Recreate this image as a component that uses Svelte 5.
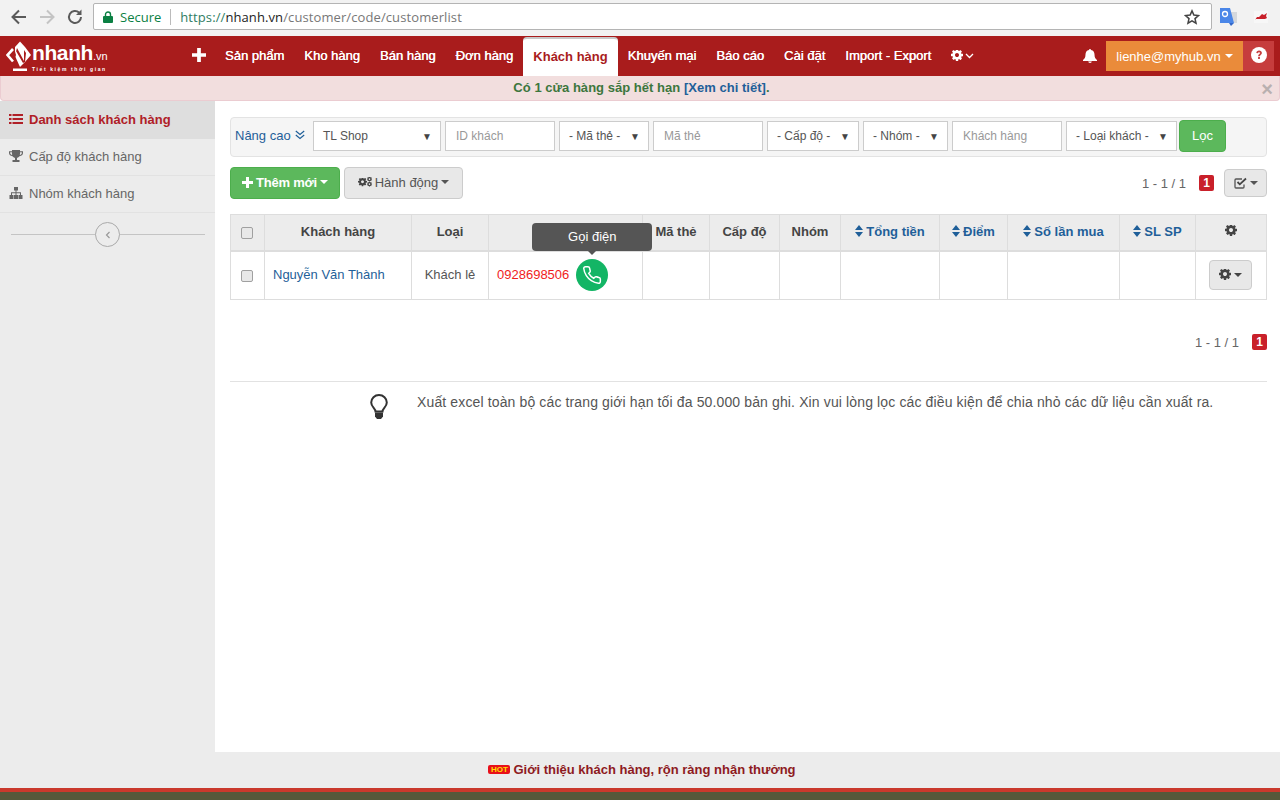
<script lang="ts">
  const navItems = ['Sản phẩm', 'Kho hàng', 'Bán hàng', 'Đơn hàng', 'Khách hàng', 'Khuyến mại', 'Báo cáo', 'Cài đặt', 'Import - Export']
  const filters = [
    { label: 'ID khách', w: 110, select: false },
    { label: '- Mã thẻ -', w: 90, select: true },
    { label: 'Mã thẻ', w: 110, select: false },
    { label: '- Cấp độ -', w: 92, select: true },
    { label: '- Nhóm -', w: 85, select: true },
    { label: 'Khách hàng', w: 110, select: false },
    { label: '- Loại khách -', w: 111, select: true }
  ]
  const columns = [
    { label: 'Mã thẻ', w: 67 },
    { label: 'Cấp độ', w: 70 },
    { label: 'Nhóm', w: 61 },
    { label: 'Tổng tiền', w: 99, sort: true },
    { label: 'Điểm', w: 68, sort: true },
    { label: 'Số lần mua', w: 112, sort: true },
    { label: 'SL SP', w: 76, sort: true }
  ]
  const gear = 'M1024 640q0-106-75-181t-181-75-181 75-75 181 75 181 181 75 181-75 75-181zm512-109v222q0 12-8 23t-20 13l-185 28q-19 54-39 91 35 50 107 138 10 12 10 25t-9 23q-27 37-99 108t-94 71q-12 0-26-9l-138-108q-44 23-91 38-16 136-29 186-7 28-36 28h-222q-14 0-24.500-8.500t-11.500-21.500l-28-184q-49-16-90-37l-141 107q-10 9-25 9-14 0-25-11-126-114-165-168-7-10-7-23 0-12 8-23 15-21 51-66.500t54-70.500q-27-50-41-99l-183-27q-13-2-21-12.500t-8-23.500v-222q0-12 8-23t19-13l186-28q14-46 39-92-40-57-107-138-10-12-10-24 0-10 9-23 26-36 98.500-107.500t94.500-71.500q13 0 26 10l138 107q44-23 91-38 16-136 29-186 7-28 36-28h222q14 0 24.500 8.500t11.500 21.500l28 184q49 16 90 37l142-107q9-9 24-9 13 0 25 10 129 119 165 170 7 8 7 22 0 12-8 23-15 21-51 66.500t-54 70.500q26 50 41 98l183 28q13 2 21 12.500t8 23.500z'
</script>

{#snippet cog(size)}
  <svg class="cog" width={size} height={size} viewBox="0 0 1536 1536"><path d={gear} fill="currentColor" /></svg>
{/snippet}

{#snippet sort()}
  <svg class="sort" width="8" height="12" viewBox="0 0 8 12"><path d="M4 0l4 5H0zM4 12L0 7h8z" fill="currentColor" /></svg>
{/snippet}

<div class="page">
  <div class="browser">
    <svg class="tool" width="18" height="18" viewBox="0 0 18 18"><path d="M16 9H3M9 2.500L2.500 9 9 15.500" fill="none" stroke="#5a5a5a" stroke-width="2" /></svg>
    <svg class="tool" width="18" height="18" viewBox="0 0 18 18"><path d="M2 9h13M9 2.500L15.500 9 9 15.500" fill="none" stroke="#c4c4c4" stroke-width="2" /></svg>
    <svg class="tool" width="18" height="18" viewBox="0 0 18 18"><path d="M15 9a6 6 0 1 1-1.800-4.300" fill="none" stroke="#5a5a5a" stroke-width="2" /><path d="M15.500 1.500v5.500H10z" fill="#5a5a5a" /></svg>
    <div class="url">
      <svg width="10" height="12" viewBox="0 0 10 12"><path d="M2.500 5V3.500a2.500 2.500 0 0 1 5 0V5" fill="none" stroke="#0b8043" stroke-width="1.400" /><rect y="5" width="10" height="7" rx="1" fill="#0b8043" /></svg>
      <span class="secure">Secure</span>
      <span class="sep"></span>
      <span class="address"><span class="https">https://</span><span class="host">nhanh.vn</span>/customer/code/customerlist</span>
      <svg class="star" width="16" height="16" viewBox="0 0 24 24"><path d="M12 2.800l2.800 6.300 6.900.7-5.200 4.600 1.500 6.800-6-3.500-6 3.500 1.500-6.800-5.200-4.600 6.900-.7z" fill="none" stroke="#444" stroke-width="2.300" /></svg>
    </div>
    <svg class="ext" width="17" height="18" viewBox="0 0 17 18"><rect x="8" y="4" width="9" height="11" fill="#d5d8dc" /><path d="M0 0h10l4 15H0z" fill="#4a86e8" /><path d="M9 15h5l-3 3z" fill="#3367c8" /><circle cx="5" cy="6" r="2.500" fill="none" stroke="#fff" stroke-width="1.300" /></svg>
    <svg class="ext2" width="14" height="12" viewBox="0 0 14 12"><rect width="14" height="12" fill="#f7f7f7" /><path d="M1 9l2-3 2 0 3-3 2 1 3-2-1 3 1 2-2 1H2z" fill="#c8202a" /></svg>
  </div>

  <nav class="topnav">
    <div class="logo">
      <svg width="26" height="30" viewBox="0 0 26 30">
        <path d="M7 8l-5.500 6L7 20.500" fill="none" stroke="#fff" stroke-width="2.600" />
        <path d="M9 6l5-5.500L19 6l6 8-6 7-5 5-5-11z" fill="#fff" />
        <path d="M11 7l7 13 0-11 2 3-1 9-2 1-7-12 0 7-1-3z" fill="#a91c1c" />
        <path d="M7 27.500h14V30H7z" fill="#fff" />
      </svg>
      <div class="logo-text">
        <div class="logo-name">nhanh<span>.vn</span></div>
        <div class="logo-tag">Tiết kiệm thời gian</div>
      </div>
    </div>
    <svg class="plus" width="14" height="14" viewBox="0 0 15 15"><path d="M5.500 0h4v5.500H15v4H9.500V15h-4V9.500H0v-4h5.500z" fill="#fff" /></svg>
    <ul class="menu">
      {#each navItems as item}
        <li class:active={item === 'Khách hàng'}>{item}</li>
      {/each}
    </ul>
    <span class="nav-gear">
      {@render cog(12)}
      <svg width="9" height="6" viewBox="0 0 9 6"><path d="M1 1l3.500 3.500L8 1" fill="none" stroke="#fff" stroke-width="1.300" /></svg>
    </span>
    <svg class="bell" width="14" height="14" viewBox="0 0 14 14"><path d="M7 0a1 1 0 0 1 1 1.100c2.400.4 3.500 2.300 3.500 4.400 0 3.200 1 4.300 2.500 5.500v1H0v-1c1.500-1.200 2.500-2.300 2.500-5.500 0-2.100 1.100-4 3.500-4.400A1 1 0 0 1 7 0zM5.200 12.600h3.600a1.800 1.400 0 0 1-3.600 0z" fill="#fff" /></svg>
    <div class="account">lienhe@myhub.vn <span class="caret"></span></div>
    <div class="help">
      <svg width="16" height="16" viewBox="0 0 16 16"><circle cx="8" cy="8" r="8" fill="#fff" /><path d="M5.300 6c0-1.500 1.200-2.500 2.800-2.500S10.900 4.500 10.900 6c0 1.800-2 1.900-2 3.200H7.100C7.100 7.200 9 7.200 9 6c0-.5-.4-.8-.9-.8-.6 0-1 .4-1 1zM7.100 10.100h1.800v1.900H7.100z" fill="#c63d3d" /></svg>
    </div>
  </nav>

  <div class="notice">
    <span>Có 1 cửa hàng sắp hết hạn <a href="#top">[Xem chi tiết]</a>.</span>
    <span class="close">×</span>
  </div>

  <div class="body">
    <aside class="sidebar">
      <div class="side-item current">
        <svg width="14" height="12" viewBox="0 0 14 12"><path d="M0 1h2.500v2H0zM3.500 1H14v2H3.500zM0 5h2.500v2H0zM3.500 5H14v2H3.500zM0 9h2.500v2H0zM3.500 9H14v2H3.500z" fill="currentColor" /></svg>
        Danh sách khách hàng
      </div>
      <div class="side-item">
        <svg width="14" height="12" viewBox="0 0 14 12"><path d="M3 0h8v1.200h3V3c0 1.700-1.500 3-3.500 3.200-.6.900-1.400 1.400-2.500 1.700V10h2.500v2h-7v-2H6V7.900c-1.100-.3-1.900-.8-2.500-1.700C1.500 6 0 4.700 0 3V1.200h3zM1.200 2.300V3c0 1 .8 1.800 2 2-.2-.8-.3-1.700-.3-2.700zM12.800 2.300h-1.700c0 1-.1 1.900-.3 2.700 1.200-.2 2-1 2-2z" fill="currentColor" fill-rule="evenodd" /></svg>
        Cấp độ khách hàng
      </div>
      <div class="side-item">
        <svg width="14" height="12" viewBox="0 0 14 12"><path d="M5 0h4v3.500H7.500V5.300H12V8h1.500v4h-4V8H11V6.300H7.500V8H9v4H5V8h1.500V6.300H3V8h1.500v4h-4V8H2V5.300h4.500V3.500H5z" fill="currentColor" /></svg>
        Nhóm khách hàng
      </div>
      <div class="collapse">
        <span class="collapse-btn">
          <svg width="6" height="8" viewBox="0 0 6 8"><path d="M4.500 1L1.500 4l3 3" fill="none" stroke="#999" stroke-width="1.200" /></svg>
        </span>
      </div>
    </aside>

    <main class="content">
      <div class="filterbar">
        <span class="advanced">Nâng cao
          <svg width="10" height="10" viewBox="0 0 10 10"><path d="M.8 1l4.200 3.500L9.200 1M.8 5l4.200 3.500L9.200 5" fill="none" stroke="currentColor" stroke-width="1.200" /></svg>
        </span>
        <div class="field select first">TL Shop<span class="arrow">▼</span></div>
        {#each filters as f}
          <div class="field" class:select={f.select} class:placeholder={!f.select} style="width: {f.w}px">
            {f.label}
            {#if f.select}<span class="arrow">▼</span>{/if}
          </div>
        {/each}
        <button class="btn-filter">Lọc</button>
      </div>

      <div class="actions">
        <button class="btn-add">
          <svg width="11" height="11" viewBox="0 0 11 11"><path d="M4 0h3v4h4v3H7v4H4V7H0V4h4z" fill="#fff" /></svg>
          Thêm mới <span class="caret"></span>
        </button>
        <button class="btn-default">
          <span class="cogs">{@render cog(9)}<span class="cogs-small">{@render cog(5)}{@render cog(5)}</span></span>
          Hành động <span class="caret"></span>
        </button>
        <div class="pager">
          <span>1 - 1 / 1</span>
          <b class="page-badge">1</b>
          <button class="btn-default small">
            <svg width="13" height="12" viewBox="0 0 13 12"><path d="M10 7.500V10a1 1 0 0 1-1 1H2a1 1 0 0 1-1-1V3a1 1 0 0 1 1-1h6" fill="none" stroke="#555" stroke-width="1.300" /><path d="M3.500 5l2.300 2.300L12 1.500" fill="none" stroke="#444" stroke-width="1.800" /></svg>
            <span class="caret"></span>
          </button>
        </div>
      </div>

      <table>
        <colgroup>
          <col style="width: 34px" /><col style="width: 147px" /><col style="width: 77px" /><col style="width: 154px" />
          {#each columns as c}<col style="width: {c.w}px" />{/each}
          <col />
        </colgroup>
        <thead>
          <tr>
            <th class="icon-cell"><span class="check"></span></th>
            <th>Khách hàng</th>
            <th>Loại</th>
            <th>Điện thoại</th>
            {#each columns as c}
              <th class:sortable={c.sort}>{#if c.sort}{@render sort()}{/if}{c.label}</th>
            {/each}
            <th class="icon-cell">{@render cog(12)}</th>
          </tr>
        </thead>
        <tbody>
          <tr>
            <td class="center"><span class="check"></span></td>
            <td class="txt"><a href="#top" class="customer">Nguyễn Văn Thành</a></td>
            <td class="center txt">Khách lẻ</td>
            <td>
              <div class="phone">
                <span class="number">0928698506</span>
                <span class="call">
                  <svg width="20" height="20" viewBox="0 0 24 24"><path d="M22 16.920v3a2 2 0 0 1-2.180 2 19.790 19.790 0 0 1-8.630-3.070 19.500 19.500 0 0 1-6-6 19.790 19.790 0 0 1-3.070-8.670A2 2 0 0 1 4.110 2h3a2 2 0 0 1 2 1.720 12.840 12.840 0 0 0 .7 2.810 2 2 0 0 1-.45 2.110L8.090 9.910a16 16 0 0 0 6 6l1.270-1.270a2 2 0 0 1 2.110-.45 12.840 12.840 0 0 0 2.810.7A2 2 0 0 1 22 16.920z" fill="none" stroke="#fff" stroke-width="1.800" /></svg>
                  <span class="tooltip">Gọi điện</span>
                </span>
              </div>
            </td>
            {#each columns as c}<td></td>{/each}
            <td class="center">
              <button class="btn-default row-btn">{@render cog(12)} <span class="caret"></span></button>
            </td>
          </tr>
        </tbody>
      </table>

      <div class="pager bottom">
        <span>1 - 1 / 1</span>
        <b class="page-badge">1</b>
      </div>

      <div class="tip">
        <svg width="18" height="26" viewBox="0 0 18 26">
          <path d="M5.500 17.500c0-3-4.300-4.500-4.300-9a7.800 7.500 0 0 1 15.600 0c0 4.500-4.300 6-4.300 9z" fill="none" stroke="#333" stroke-width="2" />
          <path d="M5 18.500h8v4l-2 2.500H7l-2-2.500z" fill="#333" />
        </svg>
        <p>Xuất excel toàn bộ các trang giới hạn tối đa 50.000 bản ghi. Xin vui lòng lọc các điều kiện để chia nhỏ các dữ liệu cần xuất ra.</p>
      </div>
    </main>
  </div>

  <footer>
    <span class="hot">HOT</span>
    <a href="#top">Giới thiệu khách hàng, rộn ràng nhận thưởng</a>
  </footer>
  <div class="footer-bar"></div>
</div>

<style>
  :global(body) {
    margin: 0;
    background: #fff;
  }

  .page {
    display: flex;
    flex-direction: column;
    height: 800px;
    overflow: hidden;
    font-family: "Liberation Sans", Arial, sans-serif;
    font-size: 13px;
    color: #555;
  }

  .browser {
    display: flex;
    align-items: center;
    flex: 0 0 36px;
    box-sizing: border-box;
    padding: 0 0 3px 10px;
    background: #f2f2f2;
  }

  .tool {
    margin-right: 10px;
  }

  .url {
    display: flex;
    align-items: center;
    box-sizing: border-box;
    width: 1119px;
    height: 27px;
    margin-left: -1px;
    padding: 0 5px 0 9px;
    border: 1px solid #b4b4b4;
    border-radius: 2px;
    background: #fff;
    font-family: "Open Sans", "Noto Sans", sans-serif;
    font-size: 13px;
    color: #777;
  }

  .secure {
    margin-left: 7px;
    color: #0b8043;
  }

  .sep {
    width: 1px;
    height: 16px;
    margin: 0 9px;
    background: #bbb;
  }

  .address {
    letter-spacing: 0.1px;
  }

  .https {
    color: #2f7d63;
  }

  .host {
    color: #222;
  }

  .star {
    margin-left: auto;
    margin-right: 6px;
  }

  .ext {
    margin-left: 8px;
  }

  .ext2 {
    margin-left: 17px;
  }

  .topnav {
    position: relative;
    display: flex;
    align-items: flex-end;
    flex: 0 0 40px;
    box-sizing: border-box;
    padding-right: 6px;
    background: #a91c1c;
    color: #fff;
  }

  .logo {
    display: flex;
    align-self: center;
    gap: 0;
    width: 192px;
    flex: none;
    padding-left: 6px;
    box-sizing: border-box;
  }

  .logo-text {
    margin-top: 2px;
  }

  .logo-name {
    font-size: 21px;
    font-weight: bold;
    line-height: 19px;
    letter-spacing: -0.4px;
  }

  .logo-name span {
    font-size: 11px;
    font-weight: normal;
    letter-spacing: 0;
  }

  .logo-tag {
    font-size: 5px;
    font-weight: bold;
    line-height: 6px;
    letter-spacing: 1.6px;
    white-space: nowrap;
  }

  .plus {
    align-self: center;
    flex: none;
    margin: 0 9px 2px 0;
  }

  .menu {
    display: flex;
    height: 39px;
    margin: 0;
    padding: 0;
    list-style: none;
    font-size: 13px;
  }

  .menu li {
    display: flex;
    align-items: center;
    padding: 0 10px 2px;
    white-space: nowrap;
    text-shadow: 0.3px 0 0 currentColor;
  }

  .menu li.active {
    box-sizing: border-box;
    border-top: 2px solid #c8c8c8;
    border-radius: 4px 4px 0 0;
    background: #fff;
    color: #a91c1c;
    font-weight: bold;
    text-shadow: none;
  }

  .nav-gear {
    display: flex;
    align-items: center;
    gap: 2px;
    align-self: center;
    margin-left: 10px;
    color: #fff;
  }

  .bell {
    align-self: center;
    margin-left: auto;
    margin-right: 9px;
  }

  .account {
    display: flex;
    align-items: center;
    justify-content: center;
    gap: 4px;
    align-self: center;
    width: 137px;
    height: 30px;
    background: #ea8b3a;
    font-size: 13px;
  }

  .help {
    display: flex;
    align-items: center;
    justify-content: center;
    align-self: center;
    box-sizing: border-box;
    width: 31px;
    height: 30px;
    padding-bottom: 2px;
    background: #c63d3d;
  }

  .caret {
    display: inline-block;
    width: 0;
    height: 0;
    border-top: 4px solid currentColor;
    border-right: 4px solid transparent;
    border-left: 4px solid transparent;
    vertical-align: middle;
  }

  .notice {
    position: relative;
    flex: 0 0 25px;
    box-sizing: border-box;
    padding-left: 3px;
    border: 1px solid #ebccd1;
    border-top: 0;
    border-radius: 0 0 4px 4px;
    background: #f2dede;
    color: #3c763d;
    font-size: 13px;
    font-weight: bold;
    line-height: 24px;
    text-align: center;
    letter-spacing: 0.03px;
  }

  .notice a {
    color: #1f5f99;
    text-decoration: none;
  }

  .close {
    position: absolute;
    top: 3px;
    right: 6px;
    color: #b9b0b0;
    font-size: 20px;
    font-weight: bold;
    line-height: 20px;
  }

  .body {
    display: flex;
    flex: 1;
    min-height: 0;
  }

  .sidebar {
    flex: 0 0 215px;
    box-sizing: border-box;
    background: #ececec;
  }

  .side-item {
    display: flex;
    align-items: center;
    gap: 6px;
    box-sizing: border-box;
    height: 37px;
    padding: 0 0 2px 9px;
    border-bottom: 1px solid #e2e2e2;
    color: #666;
  }

  .side-item.current {
    height: 38px;
    border-bottom: 0;
    background: #dedede;
    color: #b02027;
    font-weight: bold;
  }

  .collapse {
    display: flex;
    justify-content: center;
    margin: 21px 10px 0 11px;
    border-top: 1px solid #c4c4c4;
  }

  .collapse-btn {
    display: flex;
    align-items: center;
    justify-content: center;
    box-sizing: border-box;
    width: 25px;
    height: 25px;
    margin-top: -13px;
    margin-left: -1px;
    border: 1px solid #aaa;
    border-radius: 50%;
    background: #ececec;
  }

  .content {
    flex: 1;
    min-width: 0;
    box-sizing: border-box;
    padding: 16px 13px 0 15px;
  }

  .filterbar {
    display: flex;
    align-items: center;
    gap: 4px;
    box-sizing: border-box;
    height: 40px;
    padding: 0 0 2px 4px;
    border: 1px solid #e3e3e3;
    border-radius: 4px;
    background: #f5f5f5;
  }

  .advanced {
    display: flex;
    align-items: center;
    gap: 4px;
    width: 74px;
    margin-top: -2px;
    color: #1f5f99;
    white-space: nowrap;
  }

  .field {
    display: flex;
    align-items: center;
    justify-content: space-between;
    box-sizing: border-box;
    height: 30px;
    padding: 0 6px 0 9px;
    border: 1px solid #ccc;
    background: #fff;
    font-size: 12px;
    white-space: nowrap;
  }

  .field.first {
    width: 128px;
  }

  .field.placeholder {
    padding-left: 10px;
    color: #999;
  }

  .arrow {
    margin-right: 2px;
    color: #444;
    font-size: 10px;
  }

  button {
    font-family: inherit;
    font-size: 13px;
    cursor: pointer;
  }

  .btn-filter {
    width: 47px;
    height: 32px;
    margin-left: -2px;
    padding: 0 0 2px;
    border: 1px solid #4cae4c;
    border-radius: 4px;
    background: #5cb85c;
    color: #fff;
  }

  .actions {
    display: flex;
    align-items: center;
    gap: 4px;
    height: 32px;
    margin-top: 10px;
  }

  .btn-add {
    display: flex;
    align-items: center;
    justify-content: center;
    gap: 3px;
    width: 110px;
    height: 32px;
    padding: 0 0 2px;
    border: 1px solid #4cae4c;
    border-radius: 4px;
    background: #5cb85c;
    color: #fff;
    font-weight: bold;
    letter-spacing: -0.2px;
  }

  .btn-default {
    display: flex;
    align-items: center;
    justify-content: center;
    gap: 3px;
    width: 119px;
    height: 32px;
    padding: 0 0 2px;
    border: 1px solid #ccc;
    border-radius: 4px;
    background: #e8e8e8;
    color: #555;
  }

  .cogs {
    display: flex;
    align-items: center;
    gap: 0;
    color: #444;
  }

  .cogs-small {
    display: flex;
    flex-direction: column;
  }

  .pager {
    display: flex;
    align-items: center;
    margin-left: auto;
    font-size: 13px;
    color: #666;
  }

  .page-badge {
    box-sizing: border-box;
    width: 15px;
    height: 16px;
    margin-left: 13px;
    border-radius: 2px;
    background: #c9202a;
    color: #fff;
    font-size: 12px;
    line-height: 16px;
    text-align: center;
  }

  .btn-default.small {
    width: 43px;
    height: 28px;
    margin-left: 10px;
    padding: 0;
  }

  .cog {
    flex: none;
  }

  table {
    table-layout: fixed;
    width: 1037px;
    margin-top: 15px;
    border-collapse: collapse;
  }

  th {
    box-sizing: border-box;
    height: 36px;
    padding: 0 0 2px;
    border: 1px solid #ddd;
    border-bottom: 2px solid #ddd;
    background: #ececec;
    color: #444;
    font-size: 13px;
    text-align: center;
    white-space: nowrap;
  }

  th.icon-cell {
    padding: 0;
  }

  th.sortable {
    color: #1f5f99;
  }

  .sort {
    margin-right: 3px;
    vertical-align: -1px;
  }

  td {
    box-sizing: border-box;
    height: 49px;
    padding: 0 8px;
    border: 1px solid #ddd;
    color: #555;
    font-size: 13px;
  }

  td.center {
    padding: 0;
    text-align: center;
  }

  td.txt {
    padding-bottom: 2px;
  }

  .check {
    display: inline-block;
    box-sizing: border-box;
    width: 12px;
    height: 12px;
    margin-right: 2px;
    border: 1px solid #a0a0a0;
    border-radius: 2px;
    background: #e8e8e8;
    vertical-align: middle;
  }

  .customer {
    color: #1f5f99;
    text-decoration: none;
  }

  .phone {
    display: flex;
    align-items: center;
    gap: 7px;
  }

  .number {
    margin-bottom: 2px;
    color: #f01c1c;
  }

  .call {
    position: relative;
    display: flex;
    align-items: center;
    justify-content: center;
    width: 32px;
    height: 32px;
    border-radius: 50%;
    background: #13b565;
  }

  .tooltip {
    position: absolute;
    left: 50%;
    bottom: 40px;
    width: 120px;
    height: 28px;
    margin-left: -60px;
    border-radius: 4px;
    background: #555;
    color: #fff;
    font-size: 13px;
    line-height: 28px;
    text-align: center;
  }

  .tooltip::after {
    content: '';
    position: absolute;
    left: 50%;
    top: 100%;
    margin-left: -4px;
    border-top: 4px solid #555;
    border-right: 4px solid transparent;
    border-left: 4px solid transparent;
  }

  .row-btn {
    display: inline-flex;
    width: 43px;
    height: 30px;
    margin-right: 2px;
    padding: 0;
    color: #444;
    vertical-align: middle;
  }

  .bottom {
    justify-content: flex-end;
    height: 16px;
    margin-top: 34px;
  }

  .tip {
    display: flex;
    margin-top: 31px;
    padding: 12px 0 0 140px;
    border-top: 1px solid #e2e2e2;
  }

  .tip svg {
    flex: none;
    margin-right: 29px;
  }

  .tip p {
    margin: 0;
    color: #555;
    font-size: 14px;
    line-height: 17px;
    letter-spacing: 0.13px;
    white-space: nowrap;
  }

  footer {
    display: flex;
    align-items: center;
    justify-content: center;
    gap: 3px;
    flex: 0 0 36px;
    box-sizing: border-box;
    padding: 0 0 2px 4px;
    background: #ececec;
  }

  footer a {
    color: #8e1a22;
    font-weight: bold;
    text-decoration: none;
  }

  .hot {
    width: 22px;
    height: 9px;
    border-radius: 2px;
    background: #e8101a;
    color: #ffe000;
    font-size: 8px;
    font-weight: bold;
    line-height: 9px;
    text-align: center;
  }

  .footer-bar {
    flex: 0 0 12px;
    box-sizing: border-box;
    border-top: 4px solid #c9392c;
    background: #55583a;
  }
</style>
